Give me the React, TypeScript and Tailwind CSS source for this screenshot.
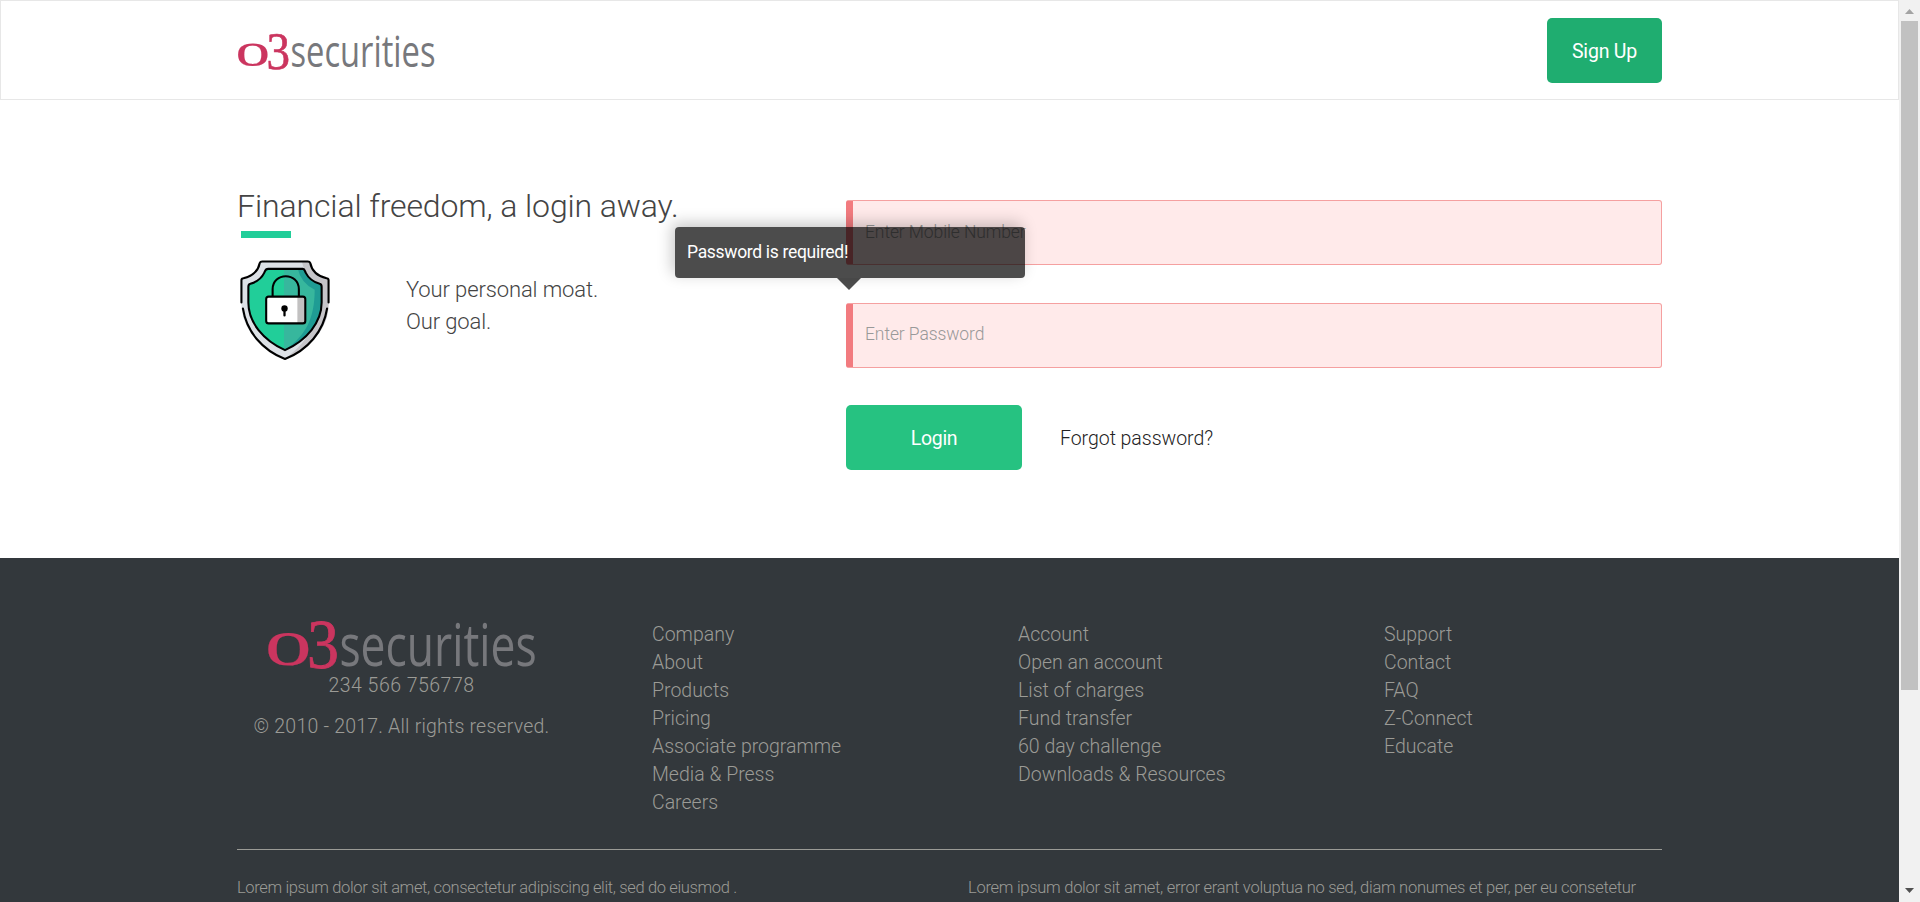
const footerColumns: string[][] = [
  ["Company", "About", "Products", "Pricing", "Associate programme", "Media & Press", "Careers"],
  ["Account", "Open an account", "List of charges", "Fund transfer", "60 day challenge", "Downloads & Resources"],
  ["Support", "Contact", "FAQ", "Z-Connect", "Educate"],
];

function Logo({ className }: { className: string }) {
  return (
    <svg viewBox="0 0 197 36" preserveAspectRatio="none" className={className} role="img" aria-label="o3securities">
      <g fill="#cb355f" stroke="#cb355f" fontFamily="'Liberation Serif', serif" fontWeight="400">
        <text x="-2.4" y="32.1" fontSize="49.5" strokeWidth="0.1" textLength="34.6" lengthAdjust="spacingAndGlyphs">o</text>
        <text x="28.6" y="34.6" fontSize="52" strokeWidth="0.6" textLength="23.5" lengthAdjust="spacingAndGlyphs">3</text>
      </g>
      <text
        x="52.5"
        y="32.7"
        fill="#77787c"
        fontSize="43"
        fontFamily="'Open Sans', sans-serif"
        fontWeight="500"
        textLength="145"
        lengthAdjust="spacingAndGlyphs"
      >
        securities
      </text>
    </svg>
  );
}

function ShieldIcon({ className }: { className: string }) {
  return (
    <svg viewBox="0 0 92 101" className={className} fill="none" strokeLinecap="round" strokeLinejoin="round">
      <path d="M21 1.5H71Q72.500 14 90 19V45C90 68 72 90 46 100C20 90 2 68 2 45V19Q18 15 21 1.500Z" fill="#dde1e6" />
      <path d="M63 1.500H71Q72.500 14 90 19V45C90 68 72 90 46 100C72 80 82 60 80 24Q65 14 63 1.500Z" fill="#c6c5c9" />
      <path d="M27 9H65Q69 20 83 25V43C83 63 68 81 46 91C24 81 9 63 9 43V25Q23 20 27 9Z" fill="#21ce99" />
      <path d="M45 9H65Q69 20 83 25V43C83 63 68 81 45 91Z" fill="#37b79d" />
      <path d="M59 9H65Q69 20 83 25V43C83 63 68 81 46 91C66 77 76 60 76 30Q62 23 59 9Z" fill="#1f9c94" />
      <g stroke="#000" strokeWidth="2.1">
        <path d="M2 43V20.500Q2 18.800 4 18.500C14 16 19 11 20.500 3Q21 1.500 23 1.500H69Q71 1.500 71.500 3C73 11 78 16 88 18.500Q90 18.800 90 20.500V43" />
        <path d="M3.500 49C7 72 23 91 46 100C69 91 85 72 88.500 49" />
        <path d="M29 9H64C66 9 66 11 67 13C70 19 74 22 81 24Q83 24.500 83 27V43C83 63 68 81 46 91C24 81 9 63 9 43V27Q9 24.500 11 24C18 22 22 19 25 13C26 11 26 9 29 9Z" />
        <path d="M33.500 37V29.500C33.500 12 60 12 60 29.500V37" />
      </g>
      <rect x="27" y="37" width="39.500" height="27" rx="2.500" fill="#fff" />
      <path d="M58.500 37H66.500V64H58.500Z" fill="#c2c1c1" />
      <rect x="27" y="37" width="39.500" height="27" rx="2.500" stroke="#000" strokeWidth="2.100" />
      <circle cx="45.500" cy="49" r="3.200" fill="#000" />
      <path d="M45.500 50V56" stroke="#000" strokeWidth="2.300" />
    </svg>
  );
}

function Scrollbar() {
  return (
    <div className="flex w-[21px] shrink-0 flex-col items-center bg-[#f1f1f1]">
      <svg viewBox="0 0 21 21" className="h-[21px] w-[21px] shrink-0">
        <path d="M6 14L10.500 9L15 14Z" fill="#a3a3a3" />
      </svg>
      <div className="h-[669px] w-[17px] bg-[#c1c1c1]" />
      <svg viewBox="0 0 21 21" className="mt-auto h-[21px] w-[21px] shrink-0">
        <path d="M6 7H15L10.500 12Z" fill="#505050" />
      </svg>
    </div>
  );
}

export default function App() {
  return (
    <div className="flex h-[902px] w-full overflow-hidden bg-white font-['Roboto',sans-serif] font-light">
      <div className="flex min-w-0 flex-1 flex-col">
        <header className="flex h-[100px] shrink-0 items-start justify-between border border-[#e7e7e7] pr-[236px] pl-[237px]">
          <Logo className="mt-[33px] h-9 w-[197px] overflow-visible" />
          <button className="mt-[17px] h-[65px] w-[115px] rounded-[5px] bg-[#1fad70] pt-[2px] text-[19.5px] font-normal tracking-[-0.21px] text-white">
            Sign Up
          </button>
        </header>

        <main className="flex h-[458px] shrink-0 pl-[237px]">
          <section className="w-[609px] pt-[86px]">
            <h1 className="text-[32px] leading-10 tracking-[-0.12px] text-[#444]">Financial freedom, a login away.</h1>
            <div className="mt-[5px] ml-1 h-[7px] w-[50px] bg-[#21ce99]" />
            <div className="mt-[22px] flex">
              <ShieldIcon className="ml-[2px] h-[100px] w-[92px]" />
              <p className="mt-[14px] ml-[75px] text-[22px] leading-8 tracking-[-0.12px] text-[#444]">
                Your personal moat.
                <br />
                Our goal.
              </p>
            </div>
          </section>

          <form className="w-[816px] pt-[100px]">
            <div className="flex h-[65px] items-center rounded-[3px] border border-l-[7px] border-[#f5a0a0] border-l-[#f27b7f] bg-[#ffeaea] pl-3 text-[17.5px] tracking-[-0.1px] text-[#999]">
              Enter Mobile Number
            </div>
            <div className="relative mt-[38px] flex h-[65px] items-center rounded-[3px] border border-l-[7px] border-[#f5a0a0] border-l-[#f27b7f] bg-[#ffeaea] pb-[2px] pl-3 text-[17.5px] tracking-[-0.1px] text-[#999]">
              Enter Password
              <div
                role="tooltip"
                className="absolute -top-[77px] -left-[178px] flex h-[51px] w-[350px] items-center rounded-[4px] bg-black/70 pl-3 font-normal tracking-[-0.31px] text-white shadow-[-3px_-4px_15px_rgba(0,0,0,0.22)]"
              >
                Password is required!
                <svg viewBox="0 0 24 12" className="absolute top-full left-[162px] h-3 w-6">
                  <path d="M0 0H24L12 12Z" fill="#000" fillOpacity="0.7" />
                </svg>
              </div>
            </div>
            <div className="mt-[37px] flex items-center">
              <button className="h-[65px] w-[176px] rounded-[5px] bg-[#26c281] pt-[2px] text-[19.5px] font-normal tracking-[-0.3px] text-white">
                Login
              </button>
              <a className="ml-[38px] pt-[2px] text-[19.5px] tracking-[-0.04px] text-[#222]">Forgot password?</a>
            </div>
          </form>
        </main>

        <footer className="h-[344px] shrink-0 overflow-hidden bg-[#33383c] pr-[237px] pl-[237px] text-[19.5px] leading-7 text-[#9b9b96]">
          <div className="flex h-[291px] pt-[62px]">
            <div className="flex w-[329px] flex-col items-center">
              <Logo className="mt-px h-[49px] w-[268px] overflow-visible" />
              <p className="mt-[2px] tracking-[0.48px]">234 566 756778</p>
              <p className="mt-[13px] tracking-[0.21px]">© 2010 - 2017. All rights reserved.</p>
            </div>
            <div className="ml-[86px] grid flex-1 grid-cols-[366px_366px_1fr]">
              {footerColumns.map((column) => (
                <ul key={column[0]} className="mt-px">
                  {column.map((label) => (
                    <li key={label}>{label}</li>
                  ))}
                </ul>
              ))}
            </div>
          </div>
          <div className="grid grid-cols-[731px_1fr] border-t border-[#9b9b96] pt-[26px] text-[16.5px] leading-6 whitespace-nowrap">
            <p className="tracking-[-0.35px]">
              Lorem ipsum dolor sit amet, consectetur adipiscing elit, sed do eiusmod .
            </p>
            <p className="tracking-[-0.27px]">
              Lorem ipsum dolor sit amet, error erant voluptua no sed, diam nonumes et per, per eu consetetur
            </p>
          </div>
        </footer>
      </div>
      <Scrollbar />
    </div>
  );
}
